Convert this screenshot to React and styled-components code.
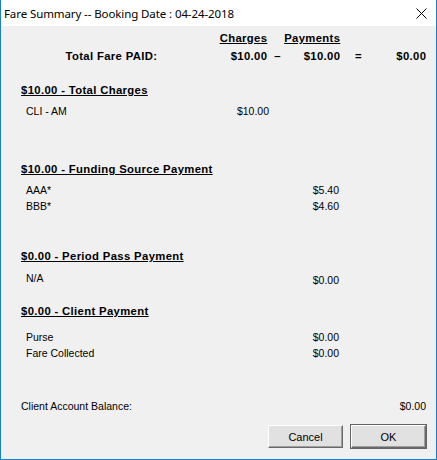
import React from "react";
import styled, { createGlobalStyle } from "styled-components";

const GlobalStyle = createGlobalStyle`
  html, body {
    margin: 0;
    padding: 0;
    background: #f0f0f0;
  }
`;

const Window = styled("div")`
  box-sizing: border-box;
  width: 437px;
  height: 460px;
  display: flex;
  flex-direction: column;
  background: #f0f0f0;
  border: 1px solid #1a7fd4;
  border-top: none;
  font-family: "Liberation Sans", Arial, sans-serif;
  color: #000;
`;

const TitleBar = styled("div")`
  height: 26px;
  flex: none;
  display: flex;
  align-items: center;
  justify-content: space-between;
  background: #fff;
  padding: 0 9px 0 3px;
`;

const Title = styled("div")`
  font-family: "Noto Sans", sans-serif;
  font-size: 11.5px;
  letter-spacing: -0.1px;
`;

const CloseIcon = styled("svg")`
  width: 11px;
  height: 11px;
  margin-top: 1px;
`;

const Body = styled("div")`
  flex: 1;
  display: flex;
  flex-direction: column;
  padding: 4px 10px 11px 20px;
`;

const Totals = styled("div")`
  display: grid;
  grid-template-columns: 136px 110px 21px 52px 37px 49px;
  grid-auto-rows: 16px;
  row-gap: 2px;
  align-items: center;
  font-size: 11.3px;
  font-weight: 700;
  letter-spacing: 0.35px;
`;

const Cell = styled("div")`
  white-space: nowrap;
  justify-self: ${(p) => (p.$center ? "center" : "end")};
  margin-right: ${(p) => (p.$center ? 0 : -0.35)}px;
  text-decoration: ${(p) => (p.$under ? "underline" : "none")};
`;

const Section = styled("div")`
  display: flex;
  flex-direction: column;
  margin-top: ${(p) => p.$top}px;
`;

const Heading = styled("div")`
  font-size: 11.3px;
  font-weight: 700;
  letter-spacing: 0.35px;
  line-height: 16px;
  text-decoration: underline;
  margin-bottom: ${(p) => p.$lead}px;
  white-space: nowrap;
`;

const Row = styled("div")`
  display: flex;
  justify-content: space-between;
  align-items: flex-start;
  width: ${(p) => p.$end - 21}px;
  padding-left: ${(p) => (p.$flush ? 0 : 5)}px;
  box-sizing: border-box;
  font-size: 10.5px;
  line-height: 16px;
  white-space: nowrap;
`;

const Amount = styled("span")`
  padding-top: ${(p) => p.$drop || 0}px;
`;

const Buttons = styled("div")`
  display: flex;
  justify-content: flex-end;
  gap: 8px;
  margin-top: auto;
`;

const Button = styled("button")`
  box-sizing: border-box;
  width: 75px;
  height: 23px;
  padding: 0;
  font-family: "Liberation Sans", Arial, sans-serif;
  font-size: 11px;
  color: #000;
  background: #e1e1e1;
  border: 1px solid;
  border-color: #fff #696969 #696969 #fff;
  box-shadow: inset -1px -1px 0 #a0a0a0;
  outline: ${(p) => (p.$default ? "1px solid #646464" : "none")};
  outline-offset: 0;
`;

const sections = [
  {
    title: "$10.00 - Total Charges",
    top: 18,
    lead: 5,
    end: 269,
    rows: [{ label: "CLI - AM", amount: "$10.00" }],
  },
  {
    title: "$10.00 - Funding Source Payment",
    top: 42,
    lead: 5,
    end: 339,
    rows: [
      { label: "AAA*", amount: "$5.40" },
      { label: "BBB*", amount: "$4.60" },
    ],
  },
  {
    title: "$0.00 - Period Pass Payment",
    top: 34,
    lead: 6,
    end: 339,
    rows: [{ label: "N/A", amount: "$0.00", drop: 2 }],
  },
  {
    title: "$0.00 - Client Payment",
    top: 15,
    lead: 10,
    end: 339,
    rows: [
      { label: "Purse", amount: "$0.00" },
      { label: "Fare Collected", amount: "$0.00" },
    ],
  },
];

export default function App() {
  return (
    <>
      <GlobalStyle />
      <Window>
        <TitleBar>
          <Title>Fare Summary -- Booking Date : 04-24-2018</Title>
          <CloseIcon viewBox="0 0 11 11">
            <path d="M0.5 0.5 L10.5 10.5 M10.5 0.5 L0.5 10.5" stroke="#000" strokeWidth="1" fill="none" />
          </CloseIcon>
        </TitleBar>
        <Body>
          <Totals>
            <div />
            <Cell $under>Charges</Cell>
            <div />
            <Cell $under>Payments</Cell>
            <div />
            <div />
            <Cell>Total Fare PAID:</Cell>
            <Cell>$10.00</Cell>
            <Cell $center>–</Cell>
            <Cell>$10.00</Cell>
            <Cell $center>=</Cell>
            <Cell>$0.00</Cell>
          </Totals>

          {sections.map((s) => (
            <Section key={s.title} $top={s.top}>
              <Heading $lead={s.lead}>{s.title}</Heading>
              {s.rows.map((r) => (
                <Row key={r.label} $end={s.end}>
                  <span>{r.label}</span>
                  <Amount $drop={r.drop}>{r.amount}</Amount>
                </Row>
              ))}
            </Section>
          ))}

          <Section $top={37}>
            <Row $end={426} $flush>
              <span>Client Account Balance:</span>
              <span>$0.00</span>
            </Row>
          </Section>

          <Buttons>
            <Button>Cancel</Button>
            <Button $default>OK</Button>
          </Buttons>
        </Body>
      </Window>
    </>
  );
}
